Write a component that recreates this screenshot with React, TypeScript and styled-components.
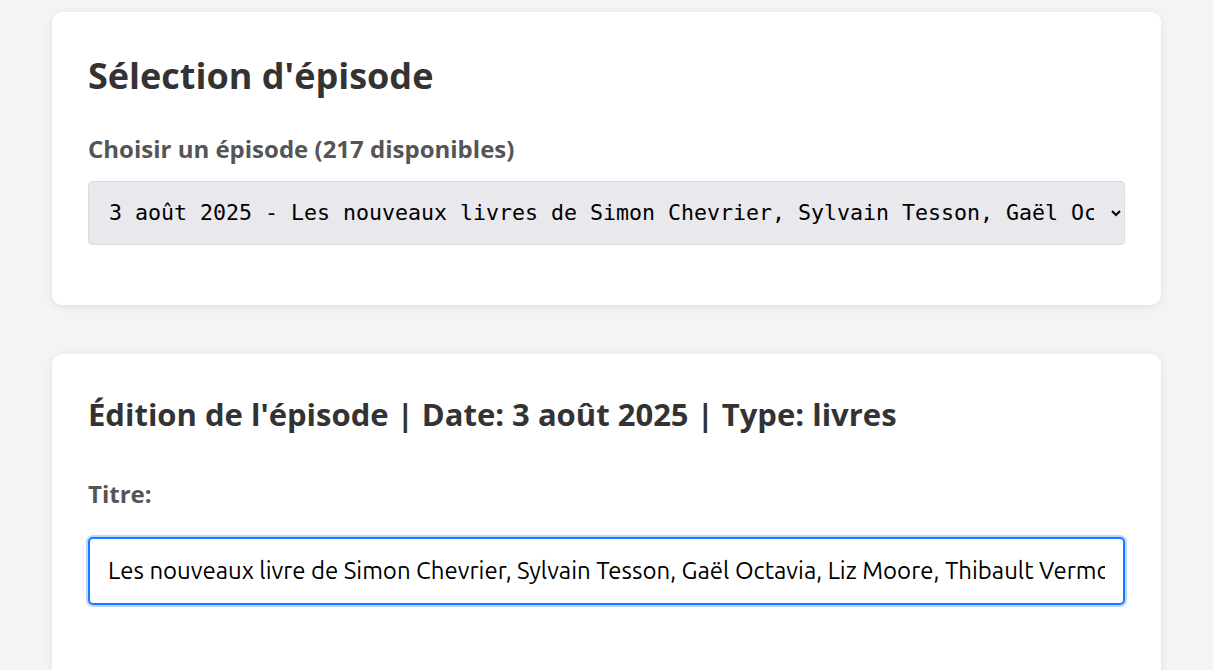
import React from "react";
import styled, { createGlobalStyle } from "styled-components";

const Global = createGlobalStyle`
  html, body { margin: 0; padding: 0; }
  body {
    background: #f4f4f4;
    font-family: "Open Sans", "Noto Sans", sans-serif;
    color: #333;
  }
`;

const Page = styled.div`
  max-width: 1109px;
  margin: 0 auto;
  padding: 12px 0;
  display: flex;
  flex-direction: column;
  gap: 49px;
`;

const Card = styled.section<{ $bottom: number }>`
  background: #fff;
  border-radius: 10px;
  box-shadow: 0 2px 10px rgba(0, 0, 0, 0.08);
  padding: 42px 36px ${(p) => p.$bottom}px;
`;

const Title = styled.h1<{ $size: number; $gap: number }>`
  margin: 0 0 ${(p) => p.$gap}px;
  font-size: ${(p) => p.$size}px;
  font-weight: 700;
  line-height: 1.2;
  color: #333;
`;

const Label = styled.label<{ $gap: number }>`
  display: block;
  font-size: 24px;
  line-height: 1.2;
  font-weight: 700;
  color: #555;
  margin-bottom: ${(p) => p.$gap}px;
`;

const Select = styled.select`
  display: block;
  width: 100%;
  height: 64px;
  box-sizing: border-box;
  padding: 0 14px 0 16px;
  font-family: "DejaVu Sans Mono", monospace;
  font-size: 21.6px;
  color: #000;
  background: #e9e8ed;
  border: 1px solid #dcdce0;
  border-radius: 4px;
`;

const TextInput = styled.input`
  display: block;
  width: 100%;
  height: 68px;
  box-sizing: border-box;
  padding: 0 18px;
  font-family: "Ubuntu", "Noto Sans", sans-serif;
  font-size: 24px;
  color: #000;
  background: #fff;
  border: 2px solid #1a7bff;
  border-radius: 5px;
  box-shadow: 0 0 0 2px rgba(26, 123, 255, 0.3);
  outline: none;
`;

export default function App() {
  return (
    <>
      <Global />
      <Page>
        <Card $bottom={60}>
          <Title $size={36} $gap={38}>Sélection d'épisode</Title>
          <Label $gap={17}>Choisir un épisode (217 disponibles)</Label>
          <Select defaultValue="a">
            <option value="a">
              3 août 2025 - Les nouveaux livres de Simon Chevrier, Sylvain Tesson, Gaël Octavia, Liz Moore, Thibault Vermot
            </option>
          </Select>
        </Card>
        <Card $bottom={120}>
          <Title $size={31} $gap={47}>Édition de l'épisode | Date: 3 août 2025 | Type: livres</Title>
          <Label $gap={28}>Titre:</Label>
          <TextInput
            type="text"
            defaultValue="Les nouveaux livre de Simon Chevrier, Sylvain Tesson, Gaël Octavia, Liz Moore, Thibault Vermot"
          />
        </Card>
      </Page>
    </>
  );
}
